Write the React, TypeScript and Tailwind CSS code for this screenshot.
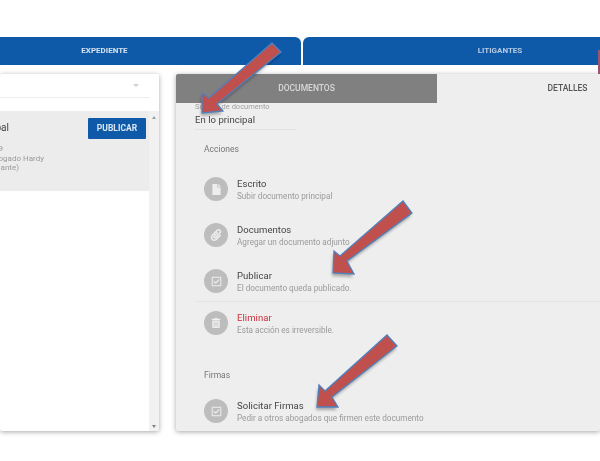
import { FaFile, FaPaperclip, FaRegCheckSquare, FaTrashAlt } from 'react-icons/fa';
import type { ReactNode } from 'react';

interface ActionRowProps {
  icon: ReactNode;
  title: string;
  note: string;
  danger?: boolean;
  className?: string;
}

function ActionRow({ icon, title, note, danger, className }: ActionRowProps) {
  return (
    <div className={`flex h-[24px] items-center gap-[9px] pl-[28px] ${className ?? ''}`}>
      <div className="flex h-[24px] w-[24px] shrink-0 items-center justify-center rounded-full bg-[#bdbdbd] text-[#eeeeee]">
        {icon}
      </div>
      <div className="whitespace-nowrap pt-[2px]">
        <div className={`text-[9.5px] leading-[12px] tracking-[0.05px] ${danger ? 'text-[#c9303a]' : 'text-[#444444]'}`}>
          {title}
        </div>
        <div className="text-[8.2px] leading-[12px] text-[#9a9a9a]">{note}</div>
      </div>
    </div>
  );
}

export default function App() {
  return (
    <div className="relative h-[461px] w-[600px] overflow-hidden bg-white font-['Roboto',sans-serif] blur-[0.4px]">
      {/* Tabs */}
      <div className="-ml-[92px] flex gap-[2px] pt-[37px]">
        <div className="flex h-[28px] w-[393px] shrink-0 items-center justify-center rounded-tr-[6px] bg-[#0f5aa8] text-[8px] font-bold text-[#d6e2f0]">
          EXPEDIENTE
        </div>
        <div className="flex h-[28px] w-[394px] shrink-0 items-center justify-center rounded-tl-[6px] bg-[#0f5aa8] text-[8px] font-bold text-[#b5cbe3]">
          LITIGANTES
        </div>
      </div>

      <div className="mt-[9px] flex h-[357px] gap-[17px]">
        {/* Left list */}
        <div className="flex w-[159px] shrink-0 flex-col overflow-hidden rounded-[2px] bg-white shadow-[0_1px_5px_rgba(0,0,0,0.35)]">
          <div className="flex h-[24px] w-[150px] shrink-0 items-center justify-end border-b border-[#eeeeee] pr-[11px]">
            <span className="h-0 w-0 border-x-[3px] border-t-[3px] border-x-transparent border-t-[#d0d0d0]" />
          </div>
          <div className="flex min-h-0 flex-1 pt-[13px]">
            <div className="w-[149px] shrink-0">
              <div className="relative flex h-[80px] justify-end overflow-hidden bg-[#ececec]">
                <div className="absolute right-[140px] top-[10px] whitespace-nowrap text-[10px] leading-[13px] text-[#444444]">
                  principal
                </div>
                <div className="absolute right-[146px] top-[33px] whitespace-nowrap text-right text-[8px] leading-[9.5px] text-[#9a9a9a]">
                  2019
                </div>
                <div className="absolute right-[105px] top-[42.5px] whitespace-nowrap text-[8px] leading-[9.5px] text-[#9a9a9a]">
                  Abogado Hardy
                </div>
                <div className="absolute right-[130px] top-[52px] whitespace-nowrap text-[8px] leading-[9.5px] text-[#9a9a9a]">
                  (Demandante)
                </div>
                <div className="mr-[3px] mt-[7px] flex h-[21px] w-[58px] items-center justify-center rounded-[1px] bg-[#0f5aa8] text-[8.5px] font-bold text-[#dbe6f2]">
                  PUBLICAR
                </div>
              </div>
            </div>
            <div className="relative flex-1 bg-[#f1f1f1]">
              <span className="absolute left-[3px] top-[5px] h-0 w-0 border-x-[2px] border-b-[3px] border-x-transparent border-b-[#a0a0a0]" />
              <span className="absolute bottom-[3px] left-[3px] h-0 w-0 border-x-[2px] border-t-[3px] border-x-transparent border-t-[#808080]" />
            </div>
          </div>
        </div>

        {/* Details */}
        <div className="flex min-w-0 flex-1 flex-col overflow-hidden rounded-[2px] bg-[#eeeeee] shadow-[0_1px_5px_rgba(0,0,0,0.35)]">
          <div className="flex h-[29px] shrink-0">
            <div className="flex w-[261px] shrink-0 items-center justify-center bg-[#808080] text-[8.5px] font-medium text-[#d8d8d8]">
              DOCUMENTOS
            </div>
            <div className="flex w-[261px] shrink-0 items-center justify-center text-[8.5px] font-medium text-[#555555]">
              DETALLES
            </div>
          </div>

          <div className="ml-[19px] w-[101px] border-b border-[#e2e2e2] pb-[3px]">
            <div className="text-[7.5px] leading-[8px] text-[#a0a0a0]">Sumilla de documento</div>
            <div className="mt-[2px] text-[9.5px] leading-[13px] tracking-[0.05px] text-[#444444]">En lo principal</div>
          </div>

          <div className="mt-[14px] pl-[28px] text-[8.5px] leading-[10px] text-[#777777]">Acciones</div>

          <ActionRow className="mt-[23px]" icon={<FaFile size={11} />} title="Escrito" note="Subir documento principal" />
          <ActionRow
            className="mt-[22px]"
            icon={<FaPaperclip size={12} />}
            title="Documentos"
            note="Agregar un documento adjunto"
          />
          <ActionRow
            className="mt-[22px]"
            icon={<FaRegCheckSquare size={11} />}
            title="Publicar"
            note="El documento queda publicado."
          />

          <div className="ml-[19px] mt-[8px] border-t border-[#e4e4e4] pt-[9px]">
            <ActionRow
              className="-ml-[19px] w-[300px]"
              icon={<FaTrashAlt size={10} />}
              title="Eliminar"
              note="Esta acción es irreversible."
              danger
            />
          </div>

          <div className="mt-[35px] pl-[28px] text-[8.5px] leading-[10px] text-[#777777]">Firmas</div>

          <ActionRow
            className="mt-[19px]"
            icon={<FaRegCheckSquare size={11} />}
            title="Solicitar Firmas"
            note="Pedir a otros abogados que firmen este documento"
          />
        </div>
      </div>

      {/* Annotation arrows drawn over the screenshot */}
      <svg className="absolute left-0 top-0 h-[461px] w-[600px]" viewBox="0 0 600 461" fill="none">
        <g className="blur-[1.5px]" fill="#000000" opacity="0.3" transform="translate(-1 3)">
          <polygon points="272,43 281,52 217,104 223,111 202,113 202,93 209,98" />
          <polygon points="403,201 412,213 347,261 354,274 333,273 334,251 340,256" />
          <polygon points="387,335 397,346 332,397 338,407 317,407 319,385 325,391" />
        </g>
        <g fill="#c0504d" stroke="#4f81bd" strokeWidth="1.3">
          <polygon points="272,43 281,52 217,104 223,111 202,113 202,93 209,98" />
          <polygon points="403,201 412,213 347,261 354,274 333,273 334,251 340,256" />
          <polygon points="387,335 397,346 332,397 338,407 317,407 319,385 325,391" />
        </g>
        <polygon points="598,50 600,50 600,74 598,74" fill="#9a5570" />
      </svg>
    </div>
  );
}
